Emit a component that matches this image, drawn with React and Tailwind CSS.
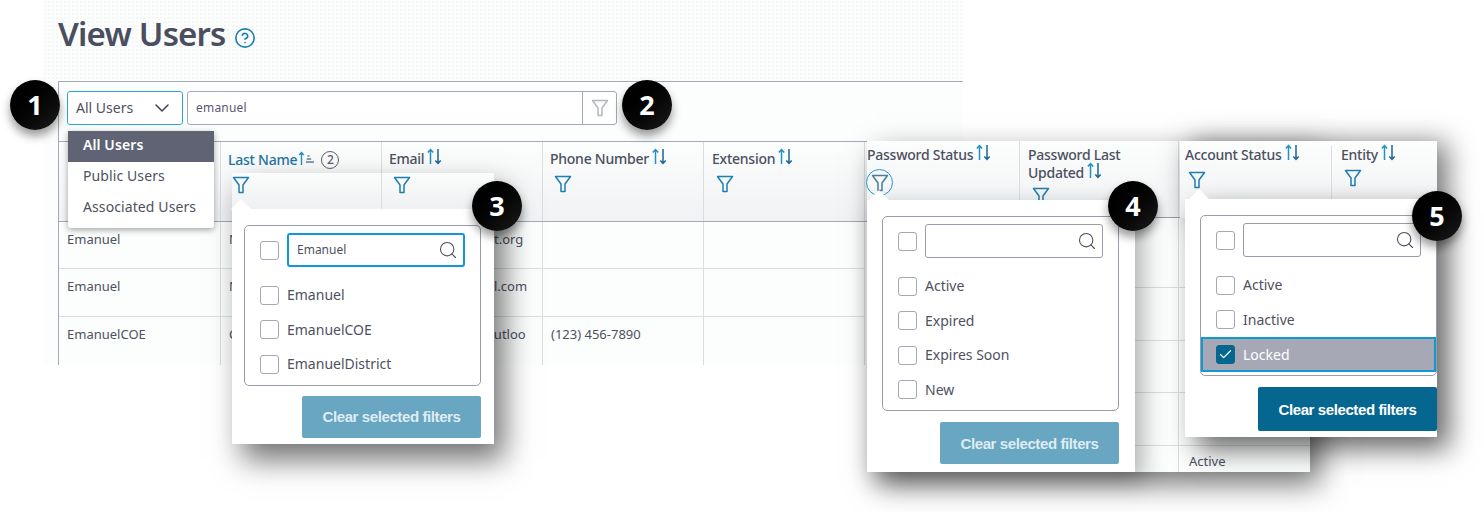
import React from "react";
import { ChevronDown, CircleHelp, Search, Check } from "lucide-react";

const Funnel = ({ className = "text-[#1f7fae]" }) => (
  <svg width="18" height="18" viewBox="0 0 18 18" fill="none" stroke="currentColor" strokeWidth="1.5" strokeLinejoin="round" className={className}>
    <path d="M1.5 1.5h15L11 9v7.5H7V9z" />
  </svg>
);

const SortArrows = () => (
  <svg width="17" height="17" viewBox="0 0 17 17" fill="none" strokeWidth="1.5" className="-mt-[2px] ml-[2px] shrink-0">
    <path d="M4.5 16V1.5M1.8 4.5l2.7-3 2.7 3" stroke="#2490c0" />
    <path d="M12 1v14.5M9.3 12.5l2.7 3 2.7-3" stroke="#1c668f" />
  </svg>
);

const SortAsc = () => (
  <svg width="18" height="15" viewBox="0 0 18 15" fill="none" strokeWidth="1.4" className="-mt-[4px] shrink-0">
    <path d="M3.5 14V1.5M1.2 4l2.3-2.5L5.8 4" stroke="#2490c0" />
    <path d="M9.5 5h2M8.7 8h4.5M8 11h8" stroke="#5b7f99" />
  </svg>
);

const Box = ({ checked }) => (
  <span className={`flex h-[19px] w-[19px] shrink-0 items-center justify-center rounded-[3px] border ${checked ? "border-[#05668f] bg-[#05668f]" : "border-[#a5a7b5] bg-white"}`}>
    {checked && <Check size={15} strokeWidth={2} className="text-white" />}
  </span>
);

const Title = ({ children }) => (
  <div className="flex items-start text-sm font-medium leading-[18px] tracking-[-0.25px] text-[#4b4f60]">{children}</div>
);

const Header = ({ children, className = "" }) => (
  <div className={`border-r border-[#dcdde3] ${className}`}>
    <Title>
      {children}
      <SortArrows />
    </Title>
    <div className="pl-[4px] pt-[7px]">
      <Funnel />
    </div>
  </div>
);

const Notch = ({ className }) => <div className={`absolute h-[14px] w-[14px] rotate-45 bg-white ${className}`} />;

const FilterBox = ({ search = "", focused, items, selected }) => (
  <div className="overflow-hidden rounded-[5px] border border-[#9a9cab] pb-[3px]">
    <div className="flex items-center gap-2 pl-[15px] pt-[7px]">
      <Box />
      <div className={`flex h-[34px] w-[178px] items-center justify-between rounded-[3px] bg-white pl-2 pr-[5px] text-xs text-[#4e5160] ${focused ? "border-2 border-[#0f9ad6]" : "border border-[#9a9cab]"}`}>
        {search}
        <Search size={20} strokeWidth={1.3} className="ml-auto text-[#4b4f60]" />
      </div>
    </div>
    <div className="pt-[11px]">
      {items.map((item) =>
        item === selected ? (
          <div key={item} className="flex h-[35px] items-center gap-2 border-2 border-[#0f9ad6] bg-[#a7a8b5] pl-[13px] text-sm text-white">
            <Box checked />
            {item}
          </div>
        ) : (
          <div key={item} className="flex h-[34.5px] items-center gap-2 pl-[15px] text-sm text-[#4e5160]">
            <Box />
            {item}
          </div>
        )
      )}
    </div>
  </div>
);

const ClearButton = ({ active, className = "" }) => (
  <div className={`flex w-[179px] items-center justify-center rounded-[2px] pt-[2px] font-['Liberation_Sans',sans-serif] text-[15px] font-bold tracking-[-0.4px] ${active ? "bg-[#05668f] text-white" : "bg-[#68a6c2] text-[#dfecf2]"} ${className}`}>
    Clear selected filters
  </div>
);

const Badge = ({ n, className }) => (
  <div className={`absolute z-20 flex h-[50px] w-[50px] items-center justify-center rounded-full bg-gradient-to-br from-[#000] to-[#1c1c1c] text-[27px] font-bold text-white shadow-[0_6px_10px_rgba(0,0,0,0.4)] ${className}`}>
    {n}
  </div>
);

const rows = [
  { first: "Emanuel", last: "N", email: "t.org", emailPad: "pl-[112px]", phone: "", h: "h-[47px]", line: "border-b" },
  { first: "Emanuel", last: "N", email: "l.com", emailPad: "pl-[112px]", phone: "", h: "h-[48px]", line: "border-b" },
  { first: "EmanuelCOE", last: "C", email: "outloo", emailPad: "pl-[104px]", phone: "(123) 456-7890", h: "h-[48px]", line: "" },
];

const Cell = ({ children, className = "" }) => (
  <div className={`overflow-hidden whitespace-nowrap border-r border-[#dcdde3] pt-[7px] leading-5 ${className}`}>{children}</div>
);

const panelRows = ["h-[70px]", "h-[53px]", "h-[52px]", "h-[53px]"];

export default function App() {
  return (
    <div className="relative h-[512px] w-[1484px] overflow-hidden bg-white font-['Noto_Sans',sans-serif]">
      {/* main page */}
      <div className="ml-[43px] h-[365px] w-[920px] bg-[#fcfdfd] pl-[15px]">
        <div className="-ml-[15px] flex h-[81px] items-start gap-2 bg-[radial-gradient(#f5f6f7_1px,transparent_1px)] bg-[length:4px_4px] pl-[15px] pt-[9px]">
          <h1 className="text-[33px] font-semibold leading-[50px] tracking-[-0.8px] text-[#4a4e5f]">View Users</h1>
          <CircleHelp size={22} strokeWidth={1.8} className="mt-[18px] text-[#1f7fae]" />
        </div>
        <div className="flex h-[60px] items-start gap-1 border-l border-t border-[#a5a8b5] pl-2 pt-[9px]">
          <div className="flex h-[34px] w-[116px] items-center justify-between rounded-[3px] border border-[#2aa4dc] bg-white pl-2 pr-[8px] text-sm text-[#4e5160]">
            All Users
            <ChevronDown size={24} strokeWidth={1.5} className="text-[#3f4352]" />
          </div>
          <div className="flex h-[34px] w-[430px] rounded-[3px] border border-[#a5a8b5] bg-white">
            <div className="flex flex-1 items-center pl-2 text-xs tracking-[0.2px] text-[#5b5770]">emanuel</div>
            <div className="flex w-[34px] items-center justify-center border-l border-[#a5a8b5]">
              <Funnel className="text-[#b3b7c1]" />
            </div>
          </div>
        </div>
        <div className="flex h-[81px] border-b border-l border-t border-[#a5a8b5] bg-gradient-to-b from-[#fcfdfd] to-[#f1f2f3]">
          <div className="w-[162px] border-r border-[#dcdde3]" />
          <div className="w-[161px] border-r border-[#dcdde3] pl-[7px] pt-[8px]">
            <div className="flex items-center gap-[1px] text-sm font-medium tracking-[-0.25px] text-[#1f74a3]">
              Last Name
              <SortAsc />
              <span className="ml-[4px] flex h-[18px] w-[18px] items-center justify-center rounded-full border border-[#5b5f70] text-[12px] text-[#5b5f70]">2</span>
            </div>
          </div>
          <Header className="w-[161px] pl-[7px] pt-[8px]">Email</Header>
          <Header className="w-[161px] pl-[7px] pt-[8px]">Phone Number</Header>
          <Header className="w-[161px] pl-[8px] pt-[8px]">Extension</Header>
        </div>
        {rows.map((r) => (
          <div key={r.first + r.last} className={`flex border-l border-[#a5a8b5] text-[13px] text-[#4e5160] ${r.h}`}>
            <Cell className={`w-[162px] pl-2 ${r.line}`}>{r.first}</Cell>
            <Cell className={`w-[161px] pl-2 ${r.line}`}>{r.last}</Cell>
            <Cell className={`w-[161px] ${r.emailPad} ${r.line}`}>{r.email}</Cell>
            <Cell className={`w-[161px] pl-2 ${r.line}`}>{r.phone}</Cell>
            <Cell className={`w-[161px] ${r.line}`} />
          </div>
        ))}
      </div>

      {/* select dropdown */}
      <div className="absolute left-[68px] top-[131px] z-10 w-[146px] rounded-b-[3px] bg-white pb-[4px] text-sm tracking-[0.1px] text-[#4e5160] shadow-[0_2px_6px_rgba(0,0,0,0.35)]">
        <div className="flex h-[31px] items-center bg-[#5f6373] pb-1 pl-[15px] font-semibold text-white">All Users</div>
        <div className="flex h-[31px] items-center pb-1 pl-[15px]">Public Users</div>
        <div className="flex h-[31px] items-center pb-1 pl-[15px]">Associated Users</div>
      </div>

      {/* last name filter */}
      <div className="absolute left-[232px] top-[173px] h-[271px] w-[262px] bg-white shadow-[10px_16px_28px_rgba(0,0,0,0.55)]">
        <div className="relative flex h-[36px] bg-gradient-to-b from-[#fbfcfc] to-[#eff0f1] pt-[3px]">
          <Funnel />
          <div className="absolute left-[149px] top-0 h-full border-l border-[#dcdde3]" />
          <div className="absolute left-[161px] top-[3px]"><Funnel /></div>
          <Notch className="-bottom-[7px] left-[2px]" />
        </div>
        <div className="relative pl-[12px] pr-[13px] pt-[16px]">
          <FilterBox search="Emanuel" focused items={["Emanuel", "EmanuelCOE", "EmanuelDistrict"]} />
          <div className="mt-[10px] flex justify-end">
            <ClearButton className="h-[42px]" />
          </div>
        </div>
      </div>

      {/* password columns screenshot */}
      <div className="absolute left-[867px] top-[141px] w-[443px] bg-[#fcfdfd] text-[13px] text-[#4e5160] shadow-[10px_12px_28px_rgba(0,0,0,0.55)]">
        <div className="flex h-[77px] border-b border-[#9a9cab] bg-gradient-to-b from-[#fcfdfd] to-[#f1f2f3]">
          <div className="w-[153px] border-r border-[#dcdde3] pt-[5px]">
            <Title>
              Password Status
              <SortArrows />
            </Title>
            <div className="-ml-px mt-[5px] flex h-[27px] w-[27px] items-center justify-center rounded-full border border-[#1f9ad6]">
              <Funnel className="text-[#4b7d99]" />
            </div>
          </div>
          <div className="w-[159px] border-r border-[#dcdde3] pl-2 pt-[5px]">
            <div className="w-[120px] text-sm font-medium leading-[18px] tracking-[-0.25px] text-[#4b4f60]">
              Password Last
              <span className="flex items-start">Updated<SortArrows /></span>
            </div>
            <div className="pl-[4px] pt-[5px]"><Funnel /></div>
          </div>
          <div className="flex-1" />
        </div>
        {panelRows.map((h, i) => (
          <div key={i} className={`flex border-b border-[#dcdde3] ${h}`}>
            <div className="w-[153px] border-r border-[#dcdde3]" />
            <div className="w-[159px] border-r border-[#dcdde3]" />
            <div className="flex-1" />
          </div>
        ))}
        <div className="flex h-[26px]">
          <div className="w-[153px] border-r border-[#dcdde3]" />
          <div className="w-[159px] border-r border-[#dcdde3]" />
          <div className="flex-1 pl-[10px] pt-[6px]">Active</div>
        </div>
      </div>

      {/* password status filter */}
      <div className="absolute left-[867px] top-[200px] h-[272px] w-[268px] bg-white pl-[15px] pr-[16px] pt-[16px] shadow-[8px_8px_22px_rgba(0,0,0,0.3)]">
        <Notch className="-top-[7px] left-[5px]" />
        <FilterBox items={["Active", "Expired", "Expires Soon", "New"]} />
        <div className="mt-[11px] flex justify-end">
          <ClearButton className="h-[42px]" />
        </div>
      </div>

      {/* account status columns */}
      <div className="absolute left-[1180px] top-[141px] flex h-[77px] w-[257px] bg-gradient-to-b from-[#fcfdfd] to-[#f1f2f3] pl-[5px] pt-[5px] shadow-[10px_2px_28px_rgba(0,0,0,0.55)]">
        <div className="w-[147px] border-r border-[#dcdde3]">
          <Title>Account Status<SortArrows /></Title>
          <div className="pl-[3px] pt-[7px]"><Funnel /></div>
        </div>
        <div className="pl-[9px]">
          <Title>Entity<SortArrows /></Title>
          <div className="pl-[3px] pt-[5px]"><Funnel /></div>
        </div>
      </div>
      <div className="absolute left-[1185px] top-[199px] h-[238px] w-[252px] bg-white pl-[15px] pt-[16px] shadow-[12px_12px_26px_rgba(0,0,0,0.6)]">
        <Notch className="-top-[7px] left-[7px]" />
        <FilterBox items={["Active", "Inactive", "Locked"]} selected="Locked" />
        <div className="mt-[11px] flex justify-end">
          <ClearButton active className="h-[44px]" />
        </div>
      </div>

      <Badge n="1" className="left-[10px] top-[80px]" />
      <Badge n="2" className="left-[622px] top-[80px]" />
      <Badge n="3" className="left-[472px] top-[181px]" />
      <Badge n="4" className="left-[1108px] top-[181px]" />
      <Badge n="5" className="left-[1412px] top-[191px]" />
    </div>
  );
}
